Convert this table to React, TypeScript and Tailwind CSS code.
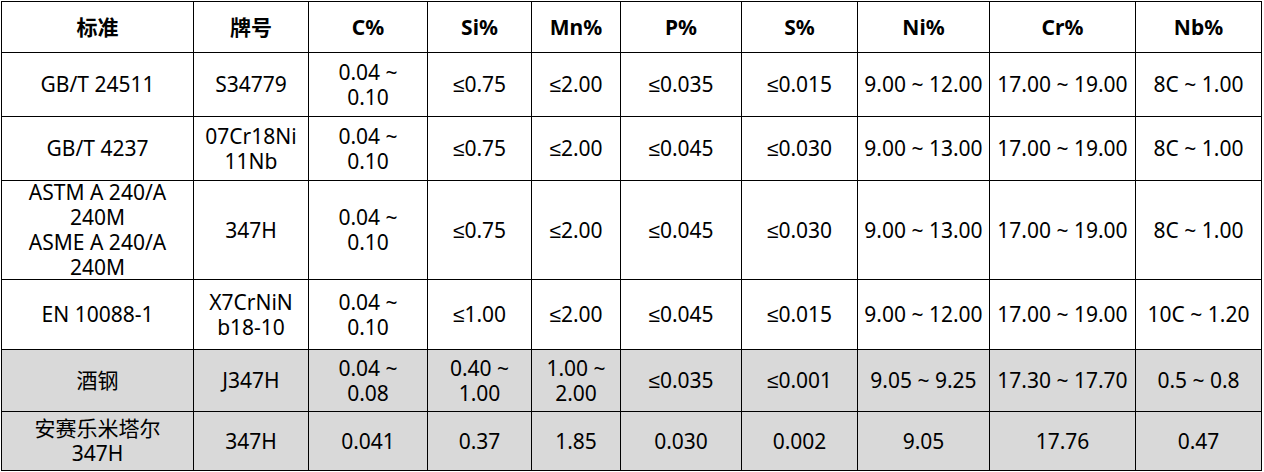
import type { ReactNode } from "react";

const widths = ["w-[192px]", "w-[115px]", "w-[119px]", "w-[104px]", "w-[89px]", "w-[121px]", "w-[116px]", "w-[132px]", "w-[146px]", "w-[126px]"];

type Row = { h: string; gray?: boolean; cells: ReactNode[] };

const header = ["标准", "牌号", "C%", "Si%", "Mn%", "P%", "S%", "Ni%", "Cr%", "Nb%"];

const two = (a: string, b: string) => (
    <>
        {a}
        <br />
        {b}
    </>
);

// the CJK font draws a slanted ≤, so take it from Liberation Sans
const le = (v: string) => (
    <>
        <span style={{ fontFamily: '"Liberation Sans", sans-serif' }}>≤</span>
        {v}
    </>
);

const rows: Row[] = [
    {
        h: "h-[64px]",
        cells: ["GB/T 24511", "S34779", two("0.04 ~", "0.10"), le("0.75"), le("2.00"), le("0.035"), le("0.015"), "9.00 ~ 12.00", "17.00 ~ 19.00", "8C ~ 1.00"],
    },
    {
        h: "h-[64px]",
        cells: ["GB/T 4237", two("07Cr18Ni", "11Nb"), two("0.04 ~", "0.10"), le("0.75"), le("2.00"), le("0.045"), le("0.030"), "9.00 ~ 13.00", "17.00 ~ 19.00", "8C ~ 1.00"],
    },
    {
        h: "h-[99px]",
        cells: [
            <>
                ASTM A 240/A
                <br />
                240M
                <br />
                ASME A 240/A
                <br />
                240M
            </>,
            "347H",
            two("0.04 ~", "0.10"),
            le("0.75"),
            le("2.00"),
            le("0.045"),
            le("0.030"),
            "9.00 ~ 13.00",
            "17.00 ~ 19.00",
            "8C ~ 1.00",
        ],
    },
    {
        h: "h-[70px]",
        cells: ["EN 10088-1", two("X7CrNiN", "b18-10"), two("0.04 ~", "0.10"), le("1.00"), le("2.00"), le("0.045"), le("0.015"), "9.00 ~ 12.00", "17.00 ~ 19.00", "10C ~ 1.20"],
    },
    {
        h: "h-[62px]",
        gray: true,
        cells: ["酒钢", "J347H", two("0.04 ~", "0.08"), two("0.40 ~", "1.00"), two("1.00 ~", "2.00"), le("0.035"), le("0.001"), "9.05 ~ 9.25", "17.30 ~ 17.70", "0.5 ~ 0.8"],
    },
    {
        h: "h-[59px]",
        gray: true,
        cells: [two("安赛乐米塔尔", "347H"), "347H", "0.041", "0.37", "1.85", "0.030", "0.002", "9.05", "17.76", "0.47"],
    },
];

export default function App() {
    return (
        <div
            className="ml-[1px] mt-[1px] w-[1261px] border-l border-t border-black bg-white text-[21px] leading-[25px] text-black"
            style={{ fontFamily: '"Noto Sans", "Noto Sans CJK SC", sans-serif' }}
        >
            {/* header */}
            <div className="flex h-[51px]">
                {header.map((t, i) => (
                    <div key={t} className={`${widths[i]} flex shrink-0 items-center justify-center border-b border-r border-black font-bold`}>
                        {t}
                    </div>
                ))}
            </div>
            {rows.map((r, ri) => (
                <div key={ri} className={`flex ${r.h} ${r.gray ? "bg-[#d9d9d9]" : ""}`}>
                    {r.cells.map((c, i) => (
                        <div key={i} className={`${widths[i]} flex shrink-0 items-center justify-center border-b border-r border-black text-center`}>
                            <div>{c}</div>
                        </div>
                    ))}
                </div>
            ))}
        </div>
    );
}
